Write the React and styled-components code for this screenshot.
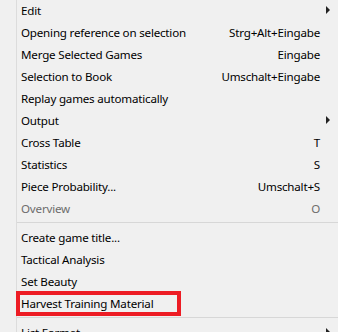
import React from 'react';
import styled, { createGlobalStyle } from 'styled-components';

const GlobalStyle = createGlobalStyle`
  html, body {
    margin: 0;
    padding: 0;
    background: #f0f0f0;
    overflow: hidden;
  }
`;

const Menu = styled.div`
  width: 338px;
  height: 332px;
  overflow: hidden;
  background: #f0f0f0;
  padding-left: 16px;
  box-sizing: border-box;
  font-family: 'Noto Sans', 'Open Sans', sans-serif;
  font-size: 11.6px;
  letter-spacing: -0.2px;
  color: #000;
`;

const List = styled.div`
  border-left: 1px solid #dcdcdc;
  min-height: 100%;
  margin-top: -1px;
`;

const Item = styled.div`
  position: relative;
  display: flex;
  align-items: center;
  height: 22px;
  padding-left: 4px;
  padding-right: 18px;
  color: ${(p) => (p.disabled ? '#6d6d6d' : '#000')};

  ${(p) =>
    p.marked &&
    `
    &::after {
      content: '';
      position: absolute;
      left: -1px;
      top: -1px;
      width: 157px;
      height: 17px;
      border: 4px solid #ed1c24;
    }
  `}
`;

const Label = styled.span`
  flex: 1;
  white-space: nowrap;
`;

const Shortcut = styled.span`
  white-space: nowrap;
`;

const Arrow = styled.span`
  position: absolute;
  right: 8px;
  top: 50%;
  margin-top: -4px;
  width: 0;
  height: 0;
  border-top: 4px solid transparent;
  border-bottom: 4px solid transparent;
  border-left: 4px solid #222;
`;

const Separator = styled.div`
  height: 1px;
  background: #d7d7d7;
  margin: 3px 0 3px 0;
`;

const items = [
  { label: 'Edit', sub: true },
  { label: 'Opening reference on selection', key: 'Strg+Alt+Eingabe' },
  { label: 'Merge Selected Games', key: 'Eingabe' },
  { label: 'Selection to Book', key: 'Umschalt+Eingabe' },
  { label: 'Replay games automatically' },
  { label: 'Output', sub: true },
  { label: 'Cross Table', key: 'T' },
  { label: 'Statistics', key: 'S' },
  { label: 'Piece Probability...', key: 'Umschalt+S' },
  { label: 'Overview', key: 'O', disabled: true },
  { sep: true },
  { label: 'Create game title...' },
  { label: 'Tactical Analysis' },
  { label: 'Set Beauty' },
  { label: 'Harvest Training Material', marked: true },
  { sep: true },
  { label: 'List Format', sub: true },
];

export default function App() {
  return (
    <>
      <GlobalStyle />
      <Menu>
        <List>
          {items.map((it, i) =>
            it.sep ? (
              <Separator key={i} />
            ) : (
              <Item key={i} disabled={it.disabled} marked={it.marked}>
                <Label>{it.label}</Label>
                {it.key && <Shortcut>{it.key}</Shortcut>}
                {it.sub && <Arrow />}
              </Item>
            )
          )}
        </List>
      </Menu>
    </>
  );
}
